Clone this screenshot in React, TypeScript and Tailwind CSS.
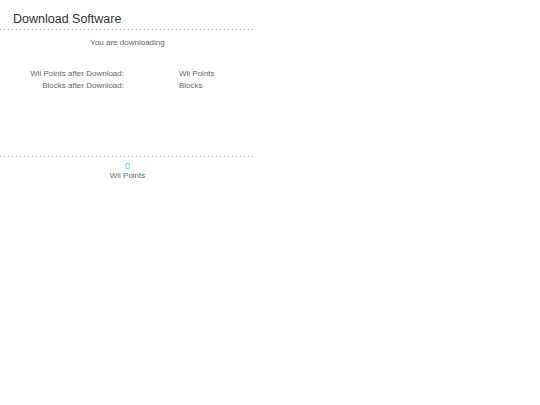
const DOTS =
  "h-px w-[255px] bg-[linear-gradient(to_right,#b8b8b8_1px,transparent_1px)] bg-[length:4px_1px]";

const ROWS: Array<{ label: string; value: string }> = [
  { label: "Wii Points after Download:", value: "Wii Points" },
  { label: "Blocks after Download:", value: "Blocks" },
];

export default function App() {
  return (
    <div className="h-[405px] w-[540px] bg-white font-['Liberation_Sans',Arial,sans-serif] text-[#666]">
      <div className="w-[255px]">
        <h1 className="h-[29px] pl-[13px] pt-[11px] text-[12.5px] leading-[16px] text-[#333]">
          Download Software
        </h1>
        <div className={DOTS} />

        <p className="pt-[8px] text-center text-[8px] leading-[10px]">You are downloading</p>

        <div className="mt-[20px] flex flex-col text-[8px] leading-[12px]">
          {ROWS.map((r) => (
            <div key={r.label} className="flex">
              <span className="w-[124px] text-right">{r.label}</span>
              <span className="pl-[55px]">{r.value}</span>
            </div>
          ))}
        </div>

        <div className={`mt-[64px] ${DOTS}`} />

        <div className="flex flex-col items-center pt-[5px] text-[8px] leading-[9px]">
          <span className="text-[9px] text-[#5cc3e6]">0</span>
          <span>Wii Points</span>
        </div>
      </div>
    </div>
  );
}
